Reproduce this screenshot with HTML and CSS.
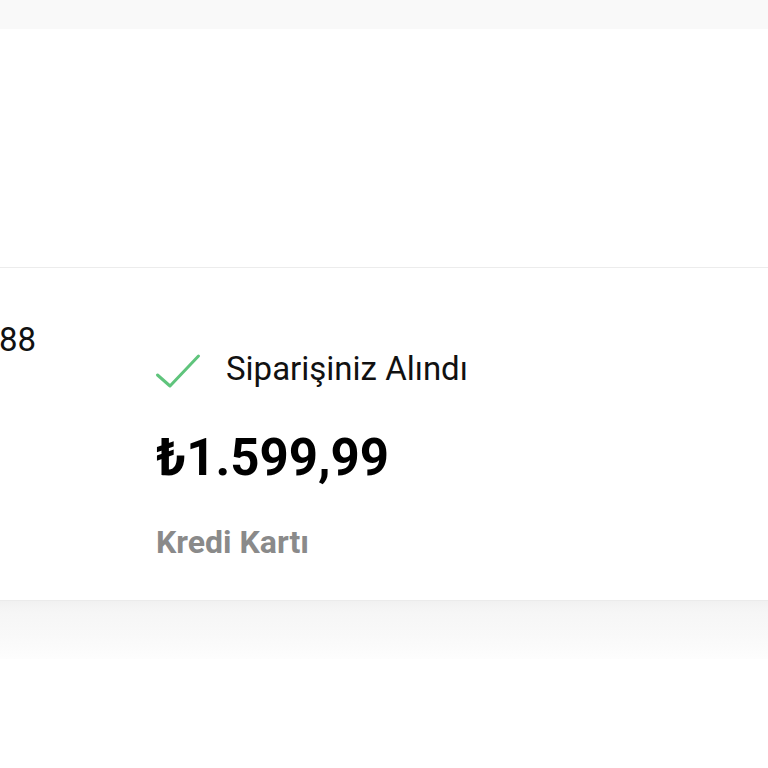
FILE: index.html
```html
<!DOCTYPE html>
<html lang="tr">
<head>
<meta charset="utf-8">
<title>Sipariş</title>
<link rel="stylesheet" href="styles.css">
</head>
<body>
<div class="topbar"></div>
<div class="hero"></div>
<section class="order">
  <div class="order-left">
    <div class="order-no">88</div>
  </div>
  <div class="order-right">
    <div class="status">
      <svg class="check" width="44" height="44" viewBox="0 0 44 44" aria-hidden="true">
        <polyline points="1.5,28 14,39 42.5,9" fill="none" stroke="#5fc47c" stroke-width="3" stroke-linecap="round" stroke-linejoin="round"/>
      </svg>
      <span class="status-text">Siparişiniz Alındı</span>
    </div>
    <div class="price">₺1.599,99</div>
    <div class="method">Kredi Kartı</div>
  </div>
</section>
<div class="shade"></div>
</body>
</html>
```
FILE: styles.css
```css
html, body {
  margin: 0;
  padding: 0;
  background: #ffffff;
  font-family: Roboto, "Liberation Sans", Arial, sans-serif;
  color: #111111;
}
.topbar {
  height: 29px;
  background: #f9f9f9;
}
.hero {
  height: 238px;
  background: #ffffff;
  border-bottom: 1px solid #ececec;
}
.order {
  display: grid;
  grid-template-columns: 156px 1fr;
  padding-top: 52px;
  padding-bottom: 38px;
  overflow: hidden;
}
.order-no {
  font-size: 33px;
  line-height: 40px;
  margin-left: -1px;
}
.order-right {
  margin-top: 27px;
  display: flex;
  flex-direction: column;
}
.status {
  display: flex;
  align-items: flex-start;
  height: 40px;
}
.check {
  flex: none;
  overflow: visible;
}
.status-text {
  margin-left: 26px;
  margin-top: 2px;
  font-size: 33px;
  line-height: 40px;
  color: #111111;
}
.price {
  margin-top: 43px;
  font-size: 51px;
  line-height: 56px;
  font-weight: 700;
  color: #000000;
}
.method {
  margin-top: 36px;
  font-size: 32px;
  line-height: 40px;
  font-weight: 700;
  color: #8a8a8a;
}
.shade {
  height: 58px;
  border-top: 1px solid #ebebeb;
  background: linear-gradient(#f1f1f1 0%, #f6f6f6 20%, #f9f9f9 60%, #fdfdfd 100%);
}
```
